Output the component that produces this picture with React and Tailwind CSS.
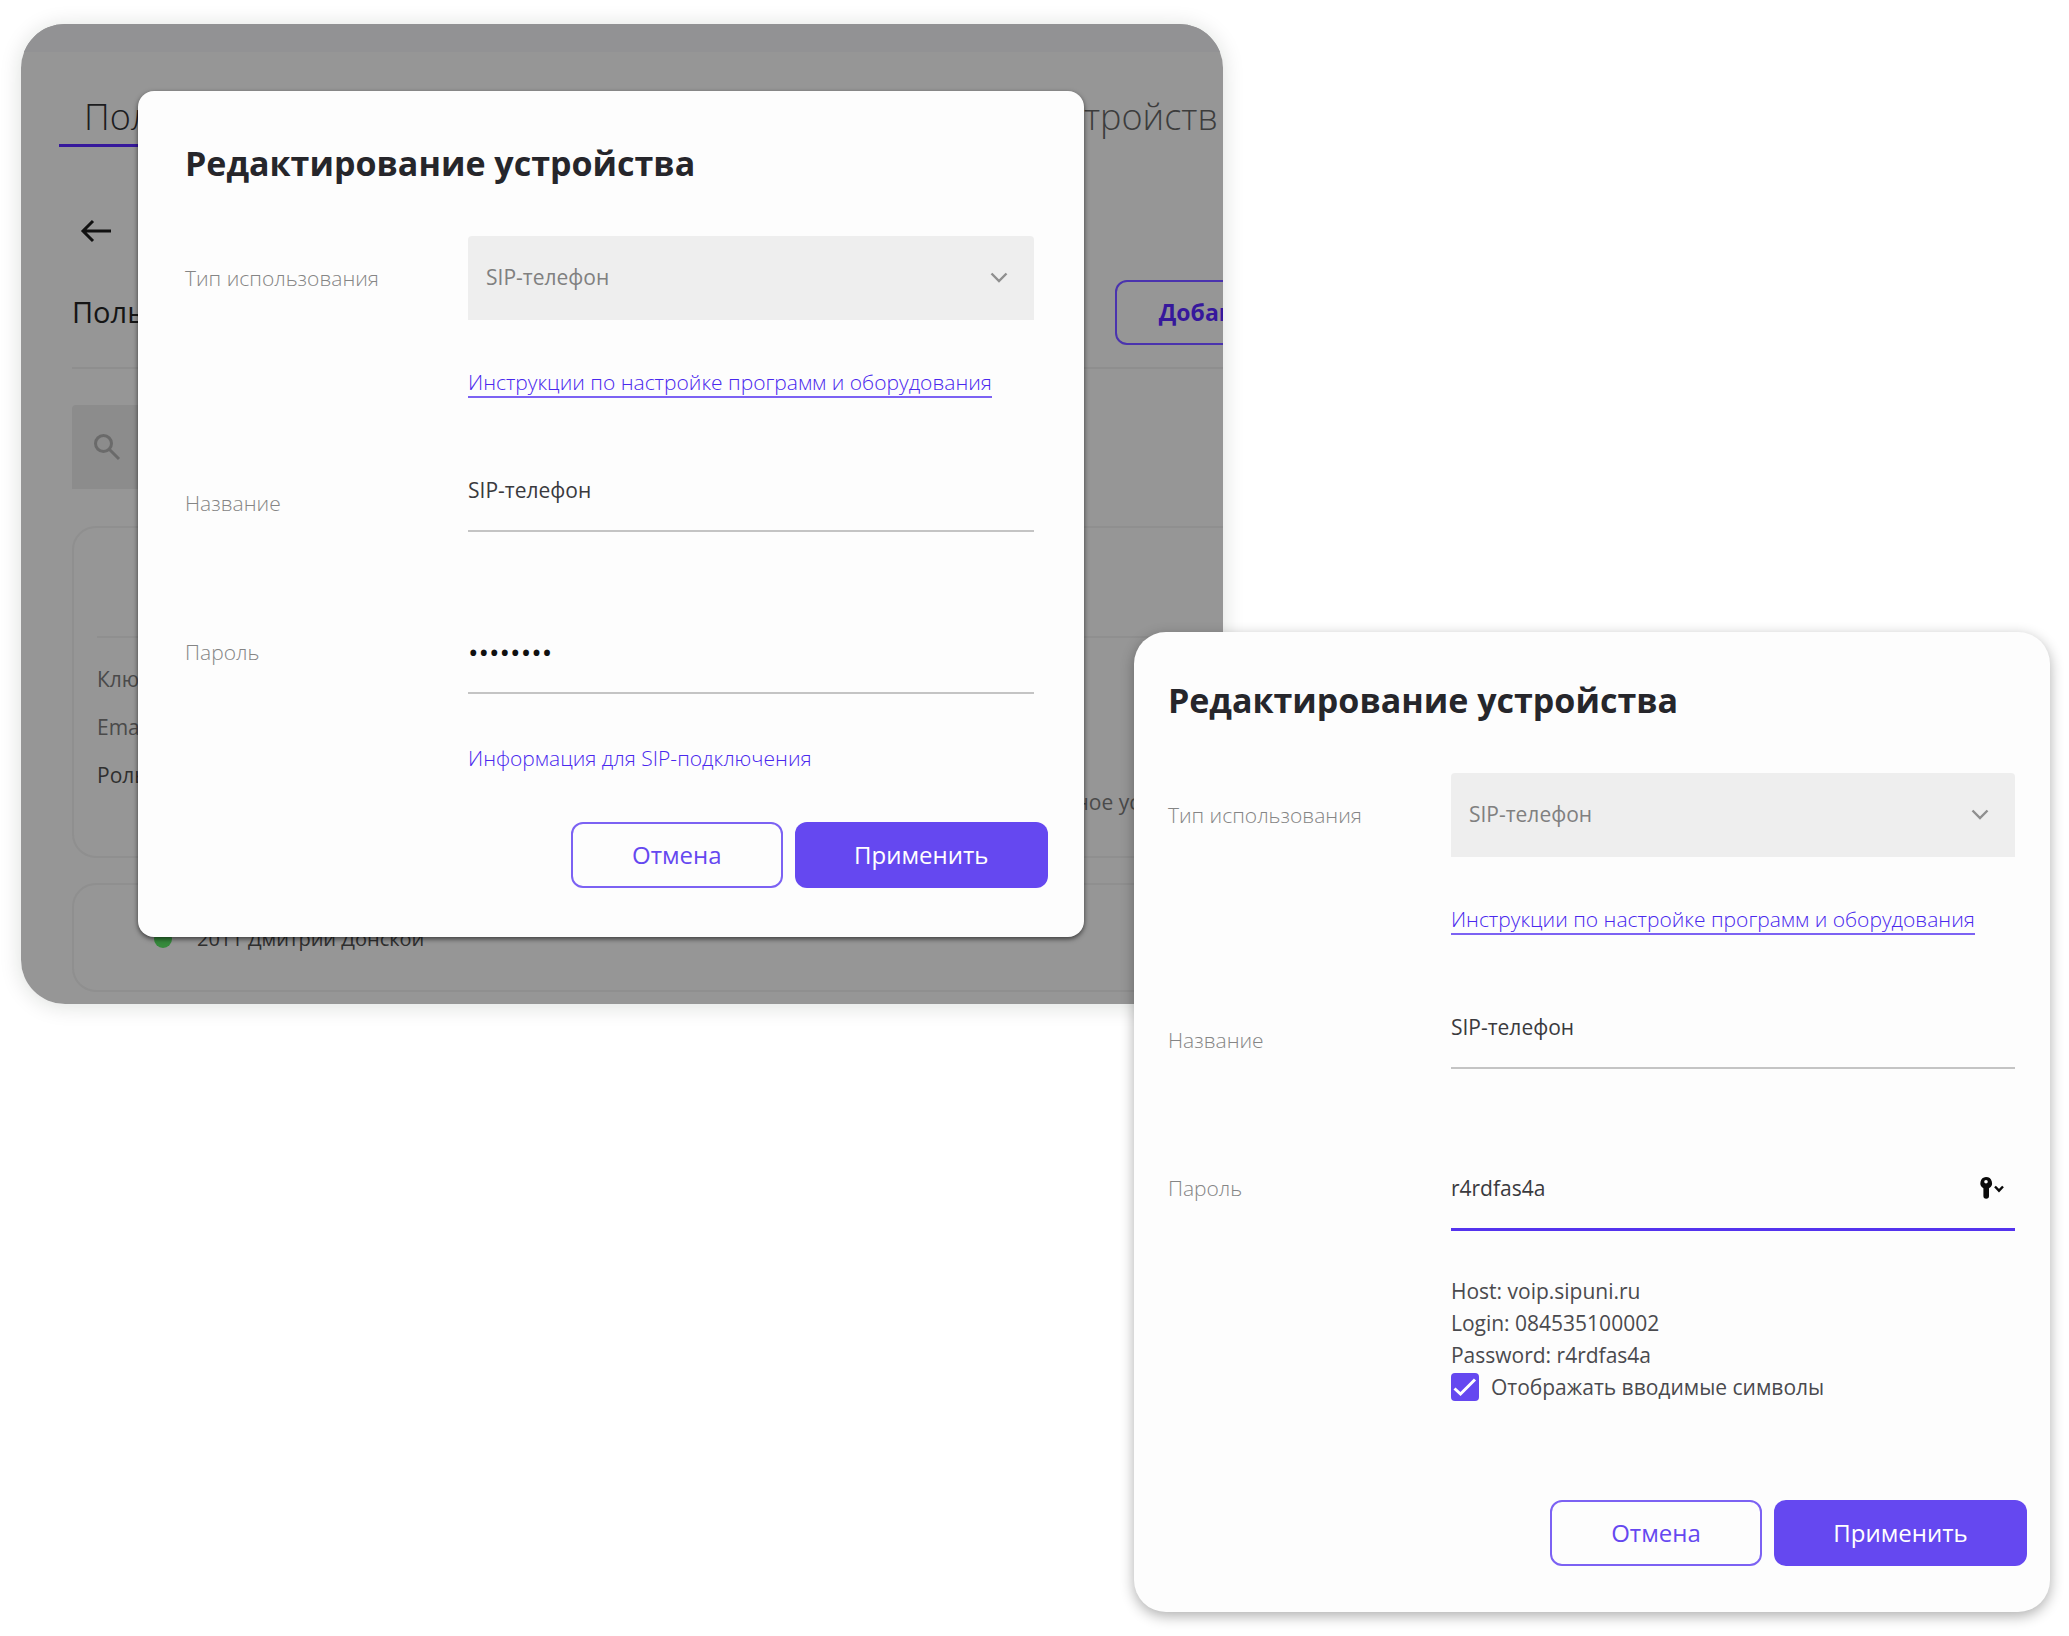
import React from "react";

const inputBase = "block w-full bg-transparent leading-8 text-[#3a3a3e] outline-none";

function Chevron() {
  return (
    <svg viewBox="0 0 18 12" className="pointer-events-none absolute right-[26px] top-1/2 h-3 w-[18px] -translate-y-1/2" fill="none" stroke="#8f8f8f" strokeWidth="2.4" aria-hidden="true">
      <path d="M1.5 1.5 9 9l7.500-7.500" />
    </svg>
  );
}

function KeyIcon() {
  return (
    <svg viewBox="0 0 26 24" className="h-6 w-[26px]" aria-hidden="true">
      <path
        fill="#0a0a0a"
        fillRule="evenodd"
        d="M7 1a6 6 0 0 1 3 11.200V20a2.800 2.800 0 0 1-5.600 0v-7.800A6 6 0 0 1 7 1Zm0 3a1.800 1.800 0 1 0 0 3.600A1.800 1.800 0 0 0 7 4Z"
      />
      <path d="m16 10.500 4 4.200 4-4.200" fill="none" stroke="#0a0a0a" strokeWidth="2.400" />
    </svg>
  );
}

function Row({ label, htmlFor, children, className }) {
  return (
    <div className={"grid grid-cols-[283px_minmax(0,1fr)] " + className}>
      <label htmlFor={htmlFor} className="text-[21px] font-light leading-8 text-[#858585]">
        {label}
      </label>
      {children}
    </div>
  );
}

function TopFields({ id }) {
  return (
    <>
      <h2 className="text-[34px] font-bold leading-10 text-[#26262b]">Редактирование устройства</h2>
      <Row label="Тип использования" htmlFor={id + "-type"} className="mt-[53px] items-center">
        <div className="relative">
          <select
            id={id + "-type"}
            disabled
            className="h-[84px] w-full appearance-none rounded-t bg-[#eeeeee] px-[18px] text-[21px] text-[#808080] opacity-100"
          >
            <option>SIP-телефон</option>
          </select>
          <Chevron />
        </div>
      </Row>
      <div className="ml-[283px] mt-12 flex">
        <a href="#instructions" className="border-b-2 border-[#7c62f3] text-[21px] font-light leading-7 text-[#4a28ee]">
          Инструкции по настройке программ и оборудования
        </a>
      </div>
      <Row label="Название" htmlFor={id + "-name"} className="mt-[76px] items-center">
        <input
          id={id + "-name"}
          defaultValue="SIP-телефон"
          className={inputBase + " h-[58px] border-b-2 border-[#c4c4c4] pb-6 text-[21px]"}
        />
      </Row>
    </>
  );
}

function Actions() {
  return (
    <div className="flex justify-end gap-3">
      <button type="button" className="h-[66px] w-[212px] rounded-xl border-2 border-[#7c62f3] text-2xl text-[#6548f0]">
        Отмена
      </button>
      <button type="button" className="h-[66px] w-[253px] rounded-xl bg-[#6548f0] text-2xl text-white">
        Применить
      </button>
    </div>
  );
}

function BackPage() {
  return (
    <div className="col-start-1 row-start-1 flex min-w-0 flex-col overflow-hidden bg-[#969696] text-[21px] text-[#2f2f2f]">
      <div className="h-7 shrink-0 bg-[#929294]" />
      <nav className="ml-[38px] mt-[38px] flex justify-between pr-[5px] text-[36px] font-light leading-[54px]">
        <a href="#users" className="border-b-[3px] border-[#36189c] px-[25px] text-[#1c1c1e]">
          Пользователи
        </a>
        <a href="#groups" className="text-[#3c3c3c]">
          Группы устройств
        </a>
      </nav>
      <button type="button" aria-label="Назад" className="ml-[59px] mt-[72px] h-6 w-8">
        <svg viewBox="0 0 32 24" className="h-6 w-8" fill="none" stroke="#111" strokeWidth="3" aria-hidden="true">
          <path d="M31 12H3M13 2 3 12l10 10" />
        </svg>
      </button>
      <div className="ml-[51px] mt-[37px] flex h-[89px] items-start border-b-2 border-[#8e8e8e]">
        <h1 className="pt-3 text-[29px] leading-10 text-[#151515]">Пользователь</h1>
        <button
          type="button"
          className="-mr-10 ml-auto h-[65px] w-[148px] shrink-0 overflow-hidden rounded-xl border-2 border-[#4a33ae] pl-[42px] text-left text-[23px] font-bold text-[#36189c]"
        >
          Добавить
        </button>
      </div>
      <div className="ml-[51px] mt-9 flex h-[84px] w-[400px] items-center rounded-t bg-[#8c8c8c] pl-[21px]">
        <svg viewBox="0 0 28 28" className="size-7 shrink-0" fill="none" stroke="#6a6a6a" strokeWidth="3" aria-hidden="true">
          <circle cx="10.500" cy="10.500" r="8" />
          <path d="m16.500 16.500 9.500 9.500" />
        </svg>
        <input aria-label="Поиск" className="ml-4 min-w-0 flex-1 bg-transparent outline-none" />
      </div>
      <section className="-mr-10 ml-[51px] mt-[37px] h-[332px] shrink-0 rounded-3xl border-2 border-[#8f8f8f] px-[23px] pt-[108px]">
        <div className="border-t-2 border-[#8f8f8f] pt-[17px] leading-[48px] text-[#4a4a4a]">
          <p>Ключ</p>
          <p>Email</p>
          <div className="grid grid-cols-[minmax(0,1fr)_244px]">
            <p className="text-[#2f2f2f]">Роль</p>
            <p className="pt-[27px]">Мобильное устройство</p>
          </div>
        </div>
      </section>
      <section className="-mr-10 ml-[51px] mt-[25px] h-[109px] shrink-0 rounded-3xl border-2 border-[#8f8f8f] pl-20 pt-[38px]">
        <p className="flex items-center gap-[25px] text-[20px] leading-8">
          <span className="size-[18px] rounded-full bg-[#368a3c]" />
          2011 Дмитрий Донской
        </p>
      </section>
    </div>
  );
}

export default function App() {
  return (
    <main className="flex flex-col bg-white pb-6 pl-[21px] pr-[19px] pt-6 font-['Open_Sans',sans-serif]">
      <div className="grid w-[59.230%] grid-cols-1 overflow-hidden rounded-[44px] shadow-[0_2px_22px_rgba(0,30,15,0.14)]">
        <BackPage />
        <form className="col-start-1 row-start-1 mb-[67px] ml-[117px] mr-[139px] mt-[67px] rounded-2xl bg-[#fdfdfd] pb-[49px] pl-[47px] pr-9 pt-[52px] shadow-[0_2px_5px_rgba(0,0,0,0.6)]">
          <div className="pr-[14px]">
            <TopFields id="a" />
            <Row label="Пароль" htmlFor="a-pass" className="mt-[104px]">
              <input
                id="a-pass"
                type="password"
                defaultValue="r4rdfas4"
                className="block h-[58px] w-full border-b-2 border-[#c4c4c4] bg-transparent pb-6 text-[28px] leading-8 text-[#111] outline-none"
              />
            </Row>
            <div className="mb-12 ml-[283px] mt-12">
              <a href="#sip-info" className="text-[21px] font-light leading-8 text-[#4a28ee]">
                Информация для SIP-подключения
              </a>
            </div>
          </div>
          <Actions />
        </form>
      </div>

      <form className="z-10 -mt-[372px] w-[45.150%] self-end rounded-[32px] bg-[#fdfdfd] pb-[46px] pl-[34px] pr-[23px] pt-12 shadow-[0_4px_14px_rgba(0,0,0,0.32)]">
        <div className="pr-3">
          <TopFields id="b" />
          <Row label="Пароль" htmlFor="b-pass" className="mt-[103px]">
            <div className="flex h-[59px] items-start border-b-[3px] border-[#5433ee]">
              <input id="b-pass" defaultValue="r4rdfas4a" className={inputBase + " text-[21px]"} />
              <button type="button" aria-label="Пароли" className="mr-[10px] mt-1">
                <KeyIcon />
              </button>
            </div>
          </Row>
          <div className="mb-[97px] ml-[283px] mt-11 text-[21px] leading-8 text-[#4a4a4e]">
            <p>Host: voip.sipuni.ru</p>
            <p>Login: 084535100002</p>
            <p>Password: r4rdfas4a</p>
            <label className="flex items-center gap-3">
              <span className="grid">
                <input
                  type="checkbox"
                  defaultChecked
                  className="peer col-start-1 row-start-1 size-7 appearance-none rounded bg-white checked:bg-[#6548f0]"
                />
                <svg
                  viewBox="0 0 28 28"
                  className="pointer-events-none col-start-1 row-start-1 hidden size-7 peer-checked:block"
                  fill="none"
                  stroke="#fff"
                  strokeWidth="3"
                  aria-hidden="true"
                >
                  <path d="m3.500 15.500 6 5.500L24 6.500" />
                </svg>
              </span>
              Отображать вводимые символы
            </label>
          </div>
        </div>
        <Actions />
      </form>
    </main>
  );
}
